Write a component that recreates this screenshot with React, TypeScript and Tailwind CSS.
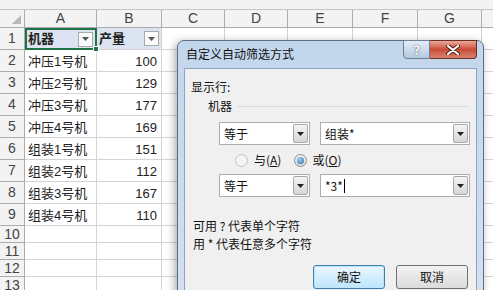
import React from 'react'

const data: [string, number][] = [
  ['冲压1号机', 100],
  ['冲压2号机', 129],
  ['冲压3号机', 177],
  ['冲压4号机', 169],
  ['组装1号机', 151],
  ['组装2号机', 112],
  ['组装3号机', 167],
  ['组装4号机', 110],
]

const cols = ['A', 'B', 'C', 'D', 'E', 'F', 'G', '']
const rowNums = [1, 2, 3, 4, 5, 6, 7, 8, 9, 10, 11, 12, 13]

const cell = 'border-r border-b border-[#d4d4d4] flex items-center'
const head = 'border-r border-b border-[#ababab] bg-[#f3f3f3] text-[#444] flex items-center justify-center'

const Arrow = () => (
  <svg width="7" height="4" viewBox="0 0 7 4">
    <path d="M0 0h7L3.5 4z" fill="#222" />
  </svg>
)

const FilterBtn = () => (
  <div className="ml-auto mr-[2px] w-[15px] h-[15px] border border-[#aaa] bg-[#fafafa] flex items-center justify-center">
    <svg width="7" height="4" viewBox="0 0 7 4">
      <path d="M0 0h7L3.5 4z" fill="#555" />
    </svg>
  </div>
)

function Combo({ width, text, caret }: { width: string; text: string; caret?: boolean }) {
  return (
    <div className={`flex h-[23px] border border-[#abadb3] bg-white ${width}`}>
      <div className="flex-1 flex items-center pl-[4px] text-[12px] text-[#111]">
        {text}
        {caret && <span className="w-px h-[14px] bg-black ml-px" />}
      </div>
      <div className="m-px w-[15px] border border-[#a8a8a8] rounded-[2px] bg-gradient-to-b from-[#f4f4f4] to-[#d6d6d6] flex items-center justify-center">
        <Arrow />
      </div>
    </div>
  )
}

function Radio({ checked, disabled }: { checked?: boolean; disabled?: boolean }) {
  return (
    <div
      className={`w-[13px] h-[13px] rounded-full border flex items-center justify-center ${
        disabled ? 'border-[#c4c4c4] bg-[#f4f4f4]' : 'border-[#8e8f8f] bg-gradient-to-b from-[#f0f0f0] to-[#d8d8d8]'
      }`}
    >
      {checked && <div className="w-[7px] h-[7px] rounded-full bg-[radial-gradient(circle_at_40%_35%,#9fd4f7,#2b6a9c)]" />}
    </div>
  )
}

const Dialog = () => (
  <div className="absolute left-[177px] top-[40px] w-[307px] h-[262px] rounded-t-[7px] border border-[#5d6f88] bg-gradient-to-b from-[#c2d6ec] to-[#d3e1f0] shadow-[-2px_2px_8px_rgba(0,0,0,0.35)] font-['Noto_Sans_CJK_SC',sans-serif]">
    <div className="absolute left-[8px] top-[4px] text-[12px] leading-[18px] text-[#111]">自定义自动筛选方式</div>
    <div className="absolute right-[6px] top-[-1px] flex">
      <div className="w-[27px] h-[19px] border border-[#6d7f98] rounded-bl-[4px] bg-gradient-to-b from-[#e4edf7] to-[#b6c9e0] flex items-center justify-center text-[12px] font-bold text-[#fff] [text-shadow:0_0_2px_#34465e]">
        ?
      </div>
      <div className="w-[47px] h-[19px] border border-l-0 border-[#6e2b25] rounded-br-[4px] bg-gradient-to-b from-[#e9a99a] via-[#c74a36] to-[#d98471] flex items-center justify-center">
        <svg width="14" height="10" viewBox="0 0 14 10">
          <path d="M2 1l10 8M12 1l-10 8" stroke="#4a1a14" strokeWidth="4" strokeLinecap="round" />
          <path d="M2 1l10 8M12 1l-10 8" stroke="#fff" strokeWidth="2.2" strokeLinecap="round" />
        </svg>
      </div>
    </div>
    <div className="absolute left-[6px] right-[6px] top-[27px] bottom-0 border border-[#8fa3bd] bg-[#f0f0f0] flex flex-col pl-[6px] text-[12px] leading-[16px] text-[#111]">
      <div className="mt-[10px]">显示行:</div>
      <div className="mt-[3px] pl-[17px] flex items-center">
        <span>机器</span>
        <div className="flex-1 ml-[6px] mr-[7px] border-t border-[#d5dbe3]" />
      </div>
      <div className="mt-[8px] pl-[28px] flex gap-[10px]">
        <Combo width="w-[91px]" text="等于" />
        <Combo width="w-[150px]" text="组装*" />
      </div>
      <div className="mt-[7px] pl-[44px] flex items-center h-[16px]">
        <Radio disabled />
        <span className="ml-[6px]">
          与(<u>A</u>)
        </span>
        <div className="ml-[13px]">
          <Radio checked />
        </div>
        <span className="ml-[5px]">
          或(<u>O</u>)
        </span>
      </div>
      <div className="mt-[6px] pl-[28px] flex gap-[10px]">
        <Combo width="w-[91px]" text="等于" />
        <Combo width="w-[150px]" text="*3*" caret />
      </div>
      <div className="mt-[20px] pl-[2px] leading-[18px]">可用 ? 代表单个字符</div>
      <div className="pl-[2px] leading-[18px]">用 * 代表任意多个字符</div>
      <div className="mt-[12px] flex justify-end gap-[11px] pr-[8px]">
        <div className="w-[72px] h-[24px] rounded-[3px] border border-[#3c7fb1] bg-gradient-to-b from-[#eaf6fd] to-[#bee6fd] shadow-[inset_0_0_0_1px_#bfe4f8] flex items-center justify-center">
          确定
        </div>
        <div className="w-[72px] h-[24px] rounded-[3px] border border-[#707070] bg-gradient-to-b from-[#f2f2f2] to-[#dcdcdc] flex items-center justify-center">
          取消
        </div>
      </div>
    </div>
  </div>
)

export default function App() {
  return (
    <div className="relative w-[493px] h-[290px] overflow-hidden bg-white font-['Liberation_Sans','Noto_Sans_CJK_SC',sans-serif] text-[13px] text-[#222]">
      <div className="h-[10px] bg-[#f3f3f3] border-b border-[#c6c6c6]" />
      <div className="grid grid-cols-[25px_72px_65px_63px_63px_65px_65px_64px_40px] grid-rows-[18px_repeat(9,22px)_repeat(4,17px)]">
        <div className={`${head} relative`}>
          <div className="absolute right-[3px] bottom-[3px] w-0 h-0 border-l-[9px] border-l-transparent border-b-[9px] border-b-[#b8b8b8]" />
        </div>
        {cols.map((c, i) => (
          <div key={i} className={`${head} text-[14px]`}>
            {c}
          </div>
        ))}
        {rowNums.map((r) => (
          <React.Fragment key={r}>
            <div className={`${head} text-[14px]`}>{r}</div>
            {r === 1 ? (
              <>
                <div className="relative border-2 border-[#217346] bg-[#dde4f1] flex items-center pl-[1px] font-bold">
                  机器
                  <FilterBtn />
                  <div className="absolute right-[-4px] bottom-[-4px] w-[6px] h-[6px] bg-[#217346] border border-white" />
                </div>
                <div className={`${cell} bg-[#dde4f1] pl-[2px] font-bold`}>
                  产量
                  <FilterBtn />
                </div>
              </>
            ) : r <= 9 ? (
              <>
                <div className={`${cell} pl-[3px] pt-[2px]`}>{data[r - 2][0]}</div>
                <div className={`${cell} justify-end pr-[4px] pt-[2px]`}>{data[r - 2][1]}</div>
              </>
            ) : (
              <>
                <div className={cell} />
                <div className={cell} />
              </>
            )}
            {[0, 1, 2, 3, 4, 5].map((k) => (
              <div key={k} className={cell} />
            ))}
          </React.Fragment>
        ))}
      </div>
      <Dialog />
    </div>
  )
}
